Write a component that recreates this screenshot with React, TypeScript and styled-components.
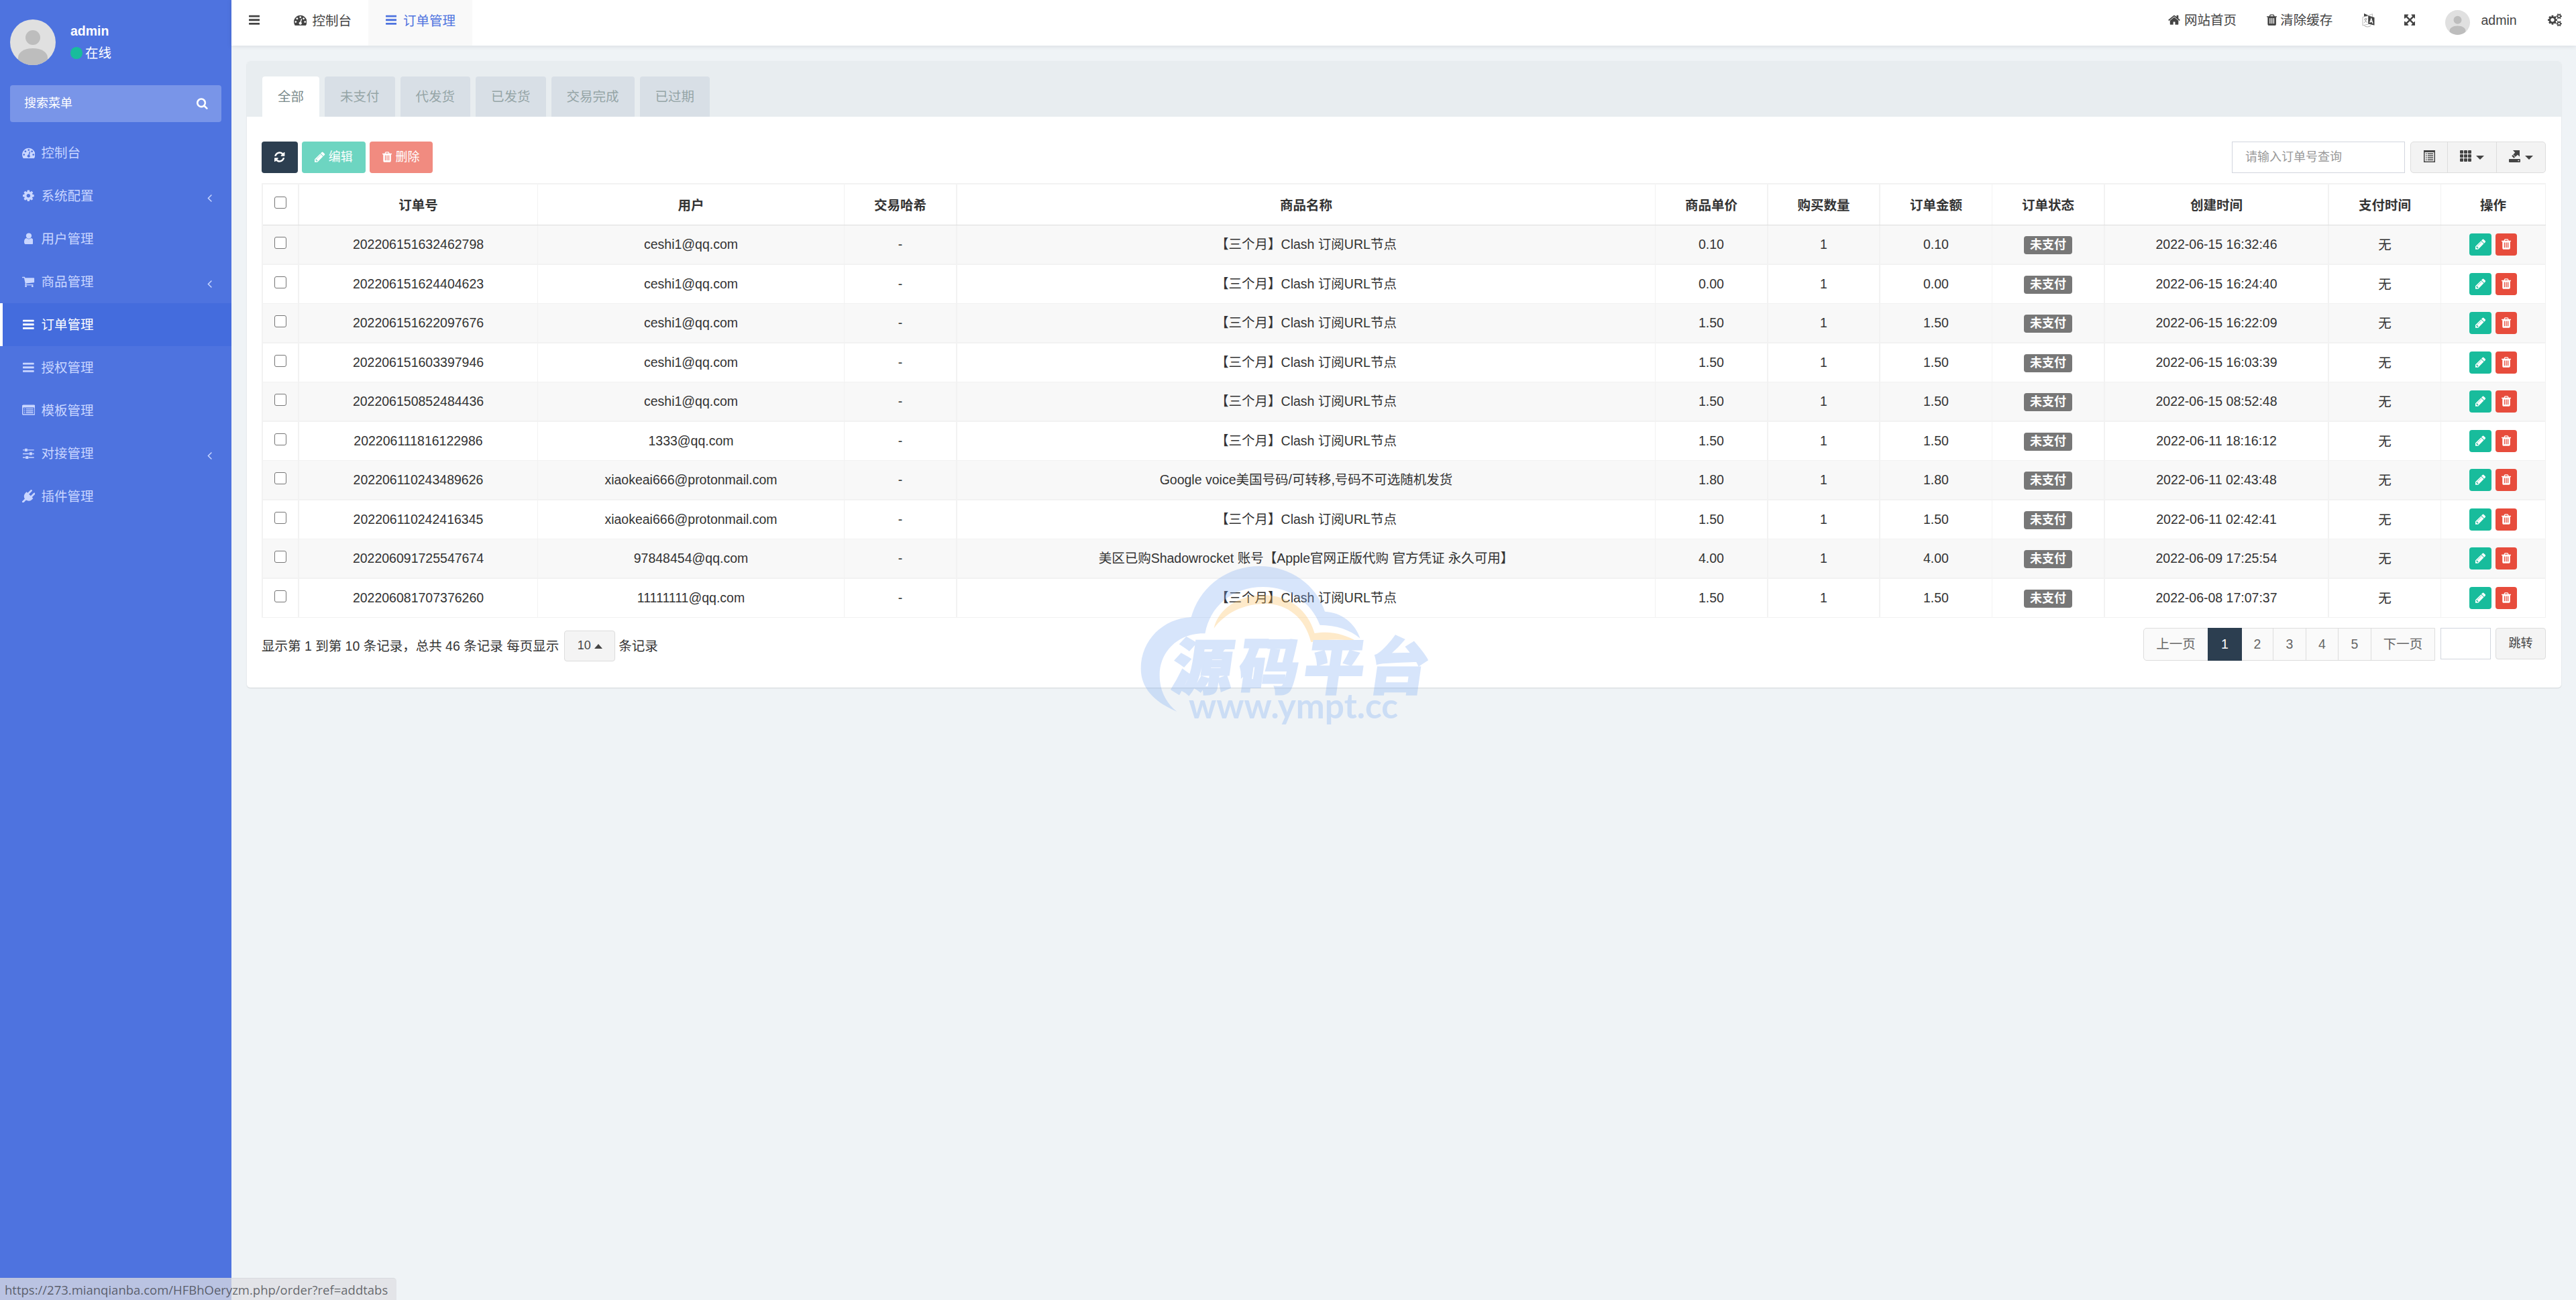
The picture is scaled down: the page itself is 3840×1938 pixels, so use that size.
import React from 'react';
import styled, { createGlobalStyle } from 'styled-components';

const GlobalStyle = createGlobalStyle`
  * { box-sizing: border-box; }
  html, body { margin: 0; padding: 0; }
  body {
    background: #eff3f6;
    color: #333;
    font-family: "Liberation Sans", "Noto Sans CJK SC", sans-serif;
    font-size: 19.5px;
    line-height: 28px;
    overflow: hidden;
  }
  button, input { font-family: inherit; line-height: inherit; margin: 0; }
`;

/* ---------- icons ---------- */

const listDot = 'v64q0 13-9.5 22.5t-22.5 9.5h-64q-13 0-22.5-9.5t-9.5-22.5v-64q0-13 9.5-22.5t22.5-9.5h64q13 0 22.5 9.5t9.5 22.5z';
const listLine = 'v64q0 13-9.5 22.5t-22.5 9.5h-960q-13 0-22.5-9.5t-9.5-22.5v-64q0-13 9.5-22.5t22.5-9.5h960q13 0 22.5 9.5t9.5 22.5z';
const smallCog = 'v140q0 16-149 31-12 27-30 52 51 113 51 138 0 4-4 7-122 71-124 71-8 0-46-47t-52-68q-20 2-30 2t-30-2q-14 21-52 68t-46 47q-2 0-124-71-4-3-4-7 0-25 51-138-18-25-30-52-149-15-149-31v-140q0-16 149-31 13-29 30-52-51-113-51-138 0-4 4-7 4-2 35-20t59-34 30-16q8 0 46 46.5t52 67.5q20-2 30-2t30 2q51-71 92-112l6-2q4 0 124 70 4 3 4 7 0 25-51 138 17 23 30 52 149 15 149 31z';
const bar = 'v128q0 26-19 45t-45 19h-1408q-26 0-45-19t-19-45v-128q0-26 19-45t45-19h1408q26 0 45 19t19 45z';
const slot = 'v-704q0-14-9-23t-23-9h-64q-14 0-23 9t-9 23v704q0 14 9 23t23 9h64q14 0 23-9t9-23z';
const knob = 'q26 0 45 19t19 45v256q0 26-19 45t-45 19h-256q-26 0-45-19t-19-45v-256q0-26 19-45t45-19h256z';
const dial = 'q0-53-37.5-90.5t-90.5-37.5-90.5 37.5-37.5 90.5 37.5 90.5 90.5 37.5 90.5-37.5 37.5-90.5z';

const glyphs = {
  bars: [1536, `M1664 1344${bar}M1664 832${bar}M1664 320${bar}`],
  dashboard: [1792, `M384 1152${dial}m192-448${dial}m428 481l101-382q6-26-7.5-48.5t-38.5-29.5-48 6.5-30 39.5l-101 382q-60 5-107 43.5t-63 98.5q-20 77 20 146t117 89 146-20 89-117q16-60-6-117t-72-91zm660-33${dial}m-640-640${dial}m448 192${dial}m320 448q0 261-141 483-19 29-54 29h-1402q-35 0-54-29-141-221-141-483 0-182 71-348t191-286 286-191 348-71 348 71 286 191 191 286 71 348z`],
  cog: [1536, 'M1152 896q0-106-75-181t-181-75-181 75-75 181 75 181 181 75 181-75 75-181zm512-109v222q0 12-8 23t-20 13l-185 28q-19 54-39 91 35 50 107 138 10 12 10 25t-9 23q-27 37-99 108t-94 71q-12 0-26-9l-138-108q-44 23-91 38-16 136-29 186-7 28-36 28h-222q-14 0-24.5-8.5t-11.5-21.5l-28-184q-49-16-90-37l-141 107q-10 9-25 9-14 0-25-11-126-114-165-168-7-10-7-23 0-12 8-23 15-21 51-66.5t54-70.5q-27-50-41-99l-183-27q-13-2-21-12.5t-8-23.5v-222q0-12 8-23t19-13l186-28q14-46 39-92-40-57-107-138-10-12-10-24 0-10 9-23 26-36 98.5-107.5t94.5-71.5q13 0 26 10l138 107q44-23 91-38 16-136 29-186 7-28 36-28h222q14 0 24.5 8.5t11.5 21.5l28 184q49 16 90 37l142-107q9-9 24-9 13 0 25 10 129 119 165 170 7 8 7 22 0 12-8 23-15 21-51 66.5t-54 70.5q26 50 41 98l183 28q13 2 21 12.5t8 23.5z'],
  user: [1280, 'M1536 1399q0 109-62.5 187t-150.5 78h-854q-88 0-150.5-78t-62.5-187q0-85 8.5-160.5t31.5-152 58.5-131 94-89 134.5-34.5q131 128 313 128t313-128q76 0 134.5 34.5t94 89 58.5 131 31.5 152 8.5 160.5zm-256-887q0 159-112.5 271.5t-271.5 112.5-271.5-112.5-112.5-271.5 112.5-271.5 271.5-112.5 271.5 112.5 112.5 271.5z'],
  cart: [1664, 'M704 1536q0 52-38 90t-90 38-90-38-38-90 38-90 90-38 90 38 38 90zm896 0q0 52-38 90t-90 38-90-38-38-90 38-90 90-38 90 38 38 90zm128-1088v512q0 24-16.5 42.5t-40.5 21.5l-1044 122q13 60 13 70 0 16-24 64h920q26 0 45 19t19 45-19 45-45 19h-1024q-26 0-45-19t-19-45q0-11 8-31.5t16-36 21.5-40 15.5-29.5l-177-823h-204q-26 0-45-19t-19-45 19-45 45-19h256q16 0 28.5 6.5t19.5 15.5 13 24.5 8 26 5.5 29.5 4.5 26h1201q26 0 45 19t19 45z'],
  listAlt: [1792, `M384 1184${listDot}m0-256${listDot}m0-256${listDot}M1536 1184${listLine}m0-256${listLine}m0-256${listLine}M1664 1376v-832q0-13-9.5-22.5t-22.5-9.5h-1472q-13 0-22.5 9.5t-9.5 22.5v832q0 13 9.5 22.5t22.5 9.5h1472q13 0 22.5-9.5t9.5-22.5zm128-1088v1088q0 66-47 113t-113 47h-1472q-66 0-113-47t-47-113v-1088q0-66 47-113t113-47h1472q66 0 113 47t47 113z`],
  sliders: [1536, `M480 1408v128h-352v-128h352zm352-128${knob}m160-384v128h-864v-128h864zm-640-512v128h-224v-128h224zm1312 1024v128h-736v-128h736zm-960-1152${knob}m640 512${knob}m320 128v128h-224v-128h224zm0-512v128h-864v-128h864z`],
  plug: [1792, 'M1755 453q37 38 37 90.5t-37 90.5l-401 400 150 150-160 160q-163 163-389.5 186.5t-411.5-100.5l-362 362h-181v-181l362-362q-124-185-100.5-411.5t186.5-389.5l160-160 150 150 400-401q38-37 91-37t90 37 37 90.5-37 90.5l-400 401 234 234 401-400q38-37 91-37t90 37z'],
  angleLeft: [640, 'M1203 544q0 13-10 23l-393 393 393 393q10 10 10 23t-10 23l-50 50q-10 10-23 10t-23-10l-466-466q-10-10-10-23t10-23l466-466q10-10 23-10t23 10l50 50q10 10 10 23z'],
  home: [1664, 'M1472 992v480q0 26-19 45t-45 19h-384v-384h-256v384h-384q-26 0-45-19t-19-45v-480q0-1 .5-3t.5-3l575-474 575 474q1 2 1 6zm223-69l-62 74q-8 9-21 11h-3q-13 0-21-7l-692-577-692 577q-12 8-24 7-13-2-21-11l-62-74q-8-10-7-23.5t11-21.5l719-599q32-26 76-26t76 26l244 204v-195q0-14 9-23t23-9h192q14 0 23 9t9 23v408l219 182q10 8 11 21.5t-7 23.5z'],
  trash: [1408, `M704 1376${slot}M960 1376${slot}M1216 1376${slot}M672 384h448l-48-117q-7-9-17-11h-317q-10 2-17 11zm928 32v64q0 14-9 23t-23 9h-96v948q0 83-47 143.5t-113 60.5h-832q-66 0-113-58.5t-47-141.5v-952h-96q-14 0-23-9t-9-23v-64q0-14 9-23t23-9h309l70-167q15-37 54-63t79-26h320q40 0 79 26t54 63l70 167h309q14 0 23 9t9 23z`],
  refresh: [1536, 'M1639 1056q0 5-1 7-64 268-268 434.5t-478 166.5q-146 0-282.5-55t-243.5-157l-129 129q-19 19-45 19t-45-19-19-45v-448q0-26 19-45t45-19h448q26 0 45 19t19 45-19 45l-137 137q71 66 161 102t187 36q134 0 250-65t186-179q11-17 53-117 8-23 30-23h192q13 0 22.5 9.5t9.5 22.5zm25-800v448q0 26-19 45t-45 19h-448q-26 0-45-19t-19-45 19-45l138-138q-148-137-349-137-134 0-250 65t-186 179q-11 17-53 117-8 23-30 23h-199q-13 0-22.5-9.5t-9.5-22.5v-7q65-268 270-434.5t480-166.5q146 0 284 55.5t245 156.5l130-129q19-19 45-19t45 19 19 45z'],
  pencil: [1536, 'M491 1536l91-91-235-235-91 91v107h128v128h107zm523-928q0-22-22-22-10 0-17 7l-542 542q-7 7-7 17 0 22 22 22 10 0 17-7l542-542q7-7 7-17zm-54-192l416 416-832 832h-416v-416zm683 96q0 53-37 90l-166 166-416-416 166-165q36-38 90-38 53 0 91 38l235 234q37 39 37 91z'],
  search: [1664, 'M1216 832q0-185-131.5-316.5t-316.5-131.5-316.5 131.5-131.5 316.5 131.5 316.5 316.5 131.5 316.5-131.5 131.5-316.5zm512 832q0 52-38 90t-90 38q-54 0-90-38l-343-342q-179 124-399 124-143 0-273.5-55.5t-225-150-150-225-55.5-273.5 55.5-273.5 150-225 225-150 273.5-55.5 273.5 55.5 225 150 150 225 55.5 273.5q0 220-124 399l343 343q37 37 37 90z'],
  arrows: [1536, 'M1411 541l-355 355 355 355 144-144q29-31 70-14 39 17 39 59v448q0 26-19 45t-45 19h-448q-42 0-59-40-17-39 14-69l144-144-355-355-355 355 144 144q31 30 14 69-17 40-59 40h-448q-26 0-45-19t-19-45v-448q0-42 40-59 39-17 69 14l144 144 355-355-355-355-144 144q-19 19-45 19-12 0-24-5-40-17-40-59v-448q0-26 19-45t45-19h448q42 0 59 40 17 39-14 69l-144 144 355 355 355-355-144-144q-31-30-14-69 17-40 59-40h448q26 0 45 19t19 45v448q0 42-39 59-13 5-25 5-26 0-45-19z'],
  cogs: [1920, `M896 896q0-106-75-181t-181-75-181 75-75 181 75 181 181 75 181-75 75-181zm768 512q0-52-38-90t-90-38-90 38-38 90q0 53 37.5 90.5t90.5 37.5 90.5-37.5 37.5-90.5zm0-1024q0-52-38-90t-90-38-90 38-38 90q0 53 37.5 90.5t90.5 37.5 90.5-37.5 37.5-90.5zm-384 421v185q0 10-7 19.5t-16 10.5l-155 24q-11 35-32 76 34 48 90 115 7 10 7 20 0 12-7 19-23 30-82.5 89.5t-78.5 59.5q-11 0-21-7l-115-90q-37 19-77 31-11 108-23 155-7 24-30 24h-186q-11 0-20-7.5t-10-17.5l-23-153q-34-10-75-31l-118 89q-7 7-20 7-11 0-21-8-144-133-144-160 0-9 7-19 10-14 41-53t47-61q-23-44-35-82l-152-24q-10-1-17-9.5t-7-19.5v-185q0-10 7-19.5t16-10.5l155-24q11-35 32-76-34-48-90-115-7-11-7-20 0-12 7-20 22-30 82-89t79-59q11 0 21 7l115 90q34-18 77-32 11-108 23-154 7-24 30-24h186q11 0 20 7.5t10 17.5l23 153q34 10 75 31l118-89q8-7 20-7 11 0 21 8 144 133 144 160 0 9-7 19-12 16-42 54t-45 60q23 48 34 82l152 23q10 2 17 10.5t7 19.5zm640 533${smallCog}m0-1024${smallCog}`],
} as const;

type GlyphName = keyof typeof glyphs;

const Icon = ({ name, size = 19.5 }: { name: GlyphName; size?: number }) => {
  const [w, d] = glyphs[name];
  const x = name === 'cogs' ? 0 : (1792 - w) / 2;
  return (
    <svg width={(size * w) / 1792} height={size} viewBox={`${x} 0 ${w} 1792`} fill="currentColor" aria-hidden>
      <path d={d} />
    </svg>
  );
};

const LanguageIcon = () => (
  <svg width="19" height="21" viewBox="0 0 19 21" aria-hidden>
    <path d="M3 0l6 2.800L9 4 3 5z" fill="#444" />
    <path d="M8.500 3.600l7-2.800V5" fill="none" stroke="#aaa" strokeWidth=".8" />
    <path d="M1 5.500l8.500-2v12.500l-8.500 2z" fill="#fff" stroke="#aaa" strokeWidth=".8" />
    <path d="M9.300 3.200l9.200 2.800v11.800l-9.200-2.400z" fill="#444" />
    <path d="M3 8.800l4.800-1M5.300 6.800v1.400M6.800 8.200q-1 4-3.800 6M4 9.500q1.500 3 4 4" fill="none" stroke="#888" strokeWidth=".8" />
    <path d="M11.800 13.800l2-6 2.200 7.200M12.400 12l3 .6" fill="none" stroke="#fff" strokeWidth="1.300" />
    <path d="M3.500 18.500q5 3.200 10-.4" fill="none" stroke="#999" strokeWidth=".8" />
  </svg>
);

const DetailIcon = () => (
  <svg width="17" height="18" viewBox="0 0 17 18" aria-hidden>
    <path fill="#444" fillRule="evenodd" d="M0 0h17v18H0zM1.500 3v13.500h14V3z" />
    <path fill="#444" d="M3 4.500h1.500v1.600H3zM3 7.500h1.500v1.600H3zM3 10.500h1.500v1.600H3zM3 13.500h1.500v1.600H3zM5.800 4.500H14v1.600H5.800zM5.800 7.500H14v1.600H5.800zM5.800 10.500H14v1.600H5.800zM5.800 13.500H14v1.600H5.800z" />
  </svg>
);

const GridIcon = () => (
  <svg width="17" height="17" viewBox="0 0 17 17" fill="#444" aria-hidden>
    {[0, 6, 12].map((y) => [0, 6, 12].map((x) => <rect key={`${x}-${y}`} x={x} y={y} width="5" height="5" rx="1" />))}
  </svg>
);

const ExportIcon = () => (
  <svg width="17" height="18" viewBox="0 0 17 18" fill="#444" aria-hidden>
    <path d="M6 0h10v9.500l-3-2.800-5.600 5-3.200-3.200 5-5z" />
    <path d="M6 6.600l3.600 3.400" stroke="#f3f3f3" strokeWidth="1" />
    <path d="M1 13h15q1 0 1 1v3q0 1-1 1H1q-1 0-1-1v-3q0-1 1-1z" />
    <rect x="13.500" y="14.800" width="1.800" height="1.400" fill="#f4f4f4" />
  </svg>
);

const Avatar = ({ size }: { size: number }) => (
  <svg width={size} height={size} viewBox="0 0 68 68" aria-hidden>
    <defs>
      <clipPath id={`round-${size}`}><circle cx="34" cy="34" r="34" /></clipPath>
    </defs>
    <g clipPath={`url(#round-${size})`}>
      <rect width="68" height="68" fill="#e0e0e0" />
      <circle cx="34" cy="27" r="11" fill="#bdbdbd" />
      <path d="M12 68V57c0-8 9-14 22-14s22 6 22 14v11z" fill="#bdbdbd" />
    </g>
  </svg>
);

/* ---------- shell ---------- */

const Shell = styled.div`
  display: grid;
  grid-template-columns: 345px 1fr;
  width: 3840px;
  height: 1938px;
  position: relative;
  overflow: hidden;
`;

const Sidebar = styled.aside`
  background: #4e73df;
  color: #fff;
`;

const UserPanel = styled.div`
  display: flex;
  gap: 22px;
  padding: 29px 15px 0;
  height: 127px;
`;

const UserInfo = styled.div`
  padding-top: 3px;
`;

const UserName = styled.div`
  font-weight: 700;
`;

const Online = styled.div`
  display: flex;
  align-items: center;
  gap: 4.5px;
  margin-top: 5px;
`;

const Dot = styled.span`
  width: 17.5px;
  height: 17.5px;
  border-radius: 50%;
  background: #18bc9c;
`;

const SearchBox = styled.label`
  display: flex;
  align-items: center;
  justify-content: space-between;
  width: 315px;
  height: 55px;
  margin: 0 15px 14px;
  padding: 0 20px 1px 21px;
  border-radius: 4px;
  background: #7995e8;
  font-size: 18px;
`;

const Menu = styled.nav`
  display: flex;
  flex-direction: column;
`;

const MenuItem = styled.a<{ $active?: boolean }>`
  display: flex;
  align-items: center;
  height: 64px;
  padding: 0 29px 0 27px;
  border-left: 4px solid ${(p) => (p.$active ? '#fff' : 'transparent')};
  background: ${(p) => (p.$active ? '#446cdd' : 'transparent')};
  color: ${(p) => (p.$active ? '#fff' : '#c9d6ff')};
`;

const MenuIcon = styled.span`
  display: flex;
  justify-content: center;
  width: 23px;
  margin-right: 7.5px;
  padding-bottom: 1px;
`;

const MenuLabel = styled.span`
  flex: 1;
`;

const Chevron = styled.span`
  display: flex;
  padding-top: 6px;
`;

const Main = styled.main`
  display: flex;
  flex-direction: column;
  min-width: 0;
`;

const Header = styled.header`
  display: flex;
  justify-content: space-between;
  height: 68px;
  background: #fff;
  color: #444;
  box-shadow: 0 1px 7px rgba(0, 21, 41, 0.1);
`;

const HeaderSide = styled.div<{ $right?: boolean }>`
  display: flex;
  padding-right: ${(p) => (p.$right ? 21.5 : 0)}px;
`;

const HeaderItem = styled.a<{ $active?: boolean; $gap?: number; $pad?: string }>`
  display: flex;
  align-items: center;
  gap: ${(p) => p.$gap ?? 8}px;
  padding: 0 ${(p) => p.$pad ?? '24.5px'};
  padding-bottom: 7px;
  background: ${(p) => (p.$active ? '#f9f9f9' : 'transparent')};
  color: ${(p) => (p.$active ? '#4e73df' : '#444')};
`;

const IconSlot = styled.span`
  display: flex;
  justify-content: center;
  width: 20px;
  padding-bottom: 1px;
`;

const RightItem = styled.a<{ $gap?: number; $ml?: number }>`
  display: flex;
  align-items: center;
  gap: ${(p) => p.$gap ?? 0}px;
  margin-left: ${(p) => p.$ml ?? 0}px;
  padding-bottom: 8px;
`;

const AvatarSlot = styled.span`
  display: flex;
  padding-top: 7px;
`;

/* ---------- panel ---------- */

const Panel = styled.section`
  margin: 23px 22px 0 23px;
  height: 934px;
  border-radius: 5px;
  background: #fff;
  box-shadow: 0 1px 2px rgba(0, 0, 0, 0.12);
  overflow: hidden;
`;

const Tabs = styled.div`
  display: flex;
  gap: 8px;
  height: 83px;
  padding: 23px 23px 0;
  background: #e8edf0;
`;

const Tab = styled.button<{ $active?: boolean }>`
  height: 60px;
  padding: 0 23px 1px;
  border: 0;
  border-radius: 4px 4px 0 0;
  background: ${(p) => (p.$active ? '#fff' : '#d8dfe6')};
  color: ${(p) => (p.$active ? '#7b8a8b' : '#95a5a6')};
  font-size: 19.5px;
`;

const PanelBody = styled.div`
  padding: 37px 23px 0 22px;
`;

const Toolbar = styled.div`
  display: flex;
  justify-content: space-between;
  height: 62px;
`;

const ToolGroup = styled.div<{ $gap: number }>`
  display: flex;
  align-items: flex-start;
  gap: ${(p) => p.$gap}px;
`;

const tones = { dark: '#2c3e50', green: '#6dd5c1', red: '#f18b80' };

const ToolButton = styled.button<{ $tone: keyof typeof tones; $width: number }>`
  display: flex;
  align-items: center;
  justify-content: center;
  gap: 5px;
  width: ${(p) => p.$width}px;
  height: 47px;
  padding: 0 0 1px;
  border: 0;
  border-radius: 4px;
  background: ${(p) => tones[p.$tone]};
  color: #fff;
  font-size: 18px;
`;

const SearchInput = styled.input`
  width: 258px;
  height: 47px;
  padding: 0 19px 1px;
  border: 1px solid #d2d6de;
  border-radius: 0;
  background: #fff;
  font-size: 18px;
  &::placeholder { color: #999; }
`;

const Segments = styled.div`
  display: flex;
  height: 47px;
  border: 1px solid #ddd;
  border-radius: 5px;
  background: #f3f3f3;
  overflow: hidden;
`;

const Segment = styled.button<{ $width: number }>`
  display: flex;
  align-items: center;
  justify-content: center;
  gap: 7px;
  width: ${(p) => p.$width}px;
  padding: 0 0 4px;
  border: 0;
  border-left: 1px solid #ddd;
  background: none;
  &:first-child { border-left: 0; }
`;

const Caret = styled.span<{ $up?: boolean }>`
  border-left: 6px solid transparent;
  border-right: 6px solid transparent;
  ${(p) => (p.$up ? 'border-bottom: 7px solid #444;' : 'border-top: 6.5px solid #444;')}
  margin-top: ${(p) => (p.$up ? 4 : 5)}px;
`;

const COLUMNS = [54, 356, 457, 168, 1041, 168, 167, 167, 168, 334, 167, 156];
const RULES = [2, 1, 1, 2, 1, 2, 2, 1, 2, 2, 1, 1];

const Table = styled.div`
  border: 2px solid #f2f2f2;
  border-right: 0;
  border-bottom: 0;
`;

const Row = styled.div<{ $head?: boolean; $odd?: boolean }>`
  display: grid;
  grid-template-columns: ${COLUMNS.map((c) => `${c}px`).join(' ')};
  height: ${(p) => (p.$head ? 61 : p.$odd ? 59 : 58)}px;
  border-bottom: ${(p) => (p.$head ? '1px solid #ddd' : `${p.$odd ? 2 : 1}px solid #f2f2f2`)};
  background: ${(p) => (p.$odd ? '#f8f8f8' : '#fff')};
  font-weight: ${(p) => (p.$head ? 700 : 400)};
`;

const Cell = styled.div<{ $rule: number; $low?: boolean }>`
  display: flex;
  align-items: center;
  justify-content: center;
  gap: 6px;
  padding: ${(p) => (p.$low ? '1px 0 0' : '0 0 1px')};
  border-right: ${(p) => p.$rule}px solid #f2f2f2;
  white-space: nowrap;
`;

const Check = styled.input.attrs({ type: 'checkbox' })`
  appearance: none;
  width: 18px;
  height: 18px;
  margin: 0 0 5px;
  border: 1px solid #767676;
  border-radius: 3px;
  background: #fff;
`;

const Status = styled.span`
  width: 72px;
  height: 27px;
  margin-top: 3px;
  border-radius: 4px;
  background: #777;
  color: #fff;
  font-size: 18px;
  font-weight: 700;
  line-height: 27px;
  text-align: center;
`;

const RowButton = styled.button<{ $red?: boolean }>`
  display: flex;
  align-items: center;
  justify-content: center;
  width: ${(p) => (p.$red ? 32 : 33)}px;
  height: 33px;
  margin-top: 1px;
  padding: 0 0 2px;
  border: 0;
  border-radius: 4px;
  background: ${(p) => (p.$red ? '#e74c3c' : '#18bc9c')};
  color: #fff;
`;

const Footer = styled.div`
  display: flex;
  justify-content: space-between;
  padding-top: 15px;
`;

const PageInfo = styled.div`
  display: flex;
  align-items: center;
  height: 46px;
  margin-top: 4px;
  white-space: pre;
`;

const SizeButton = styled.button`
  display: flex;
  align-items: center;
  justify-content: center;
  gap: 5px;
  width: 76px;
  height: 46px;
  margin: 0 5px 0 8px;
  padding: 0 0 3px;
  border: 1px solid #ddd;
  border-radius: 4px;
  background: #f4f4f4;
  color: #444;
  font-size: 18px;
`;

const Pager = styled.div`
  display: flex;
  align-items: flex-start;
`;

const PageList = styled.div`
  display: flex;
  height: 49px;
  border: 1px solid #ddd;
  border-radius: 5px 0 0 5px;
  background: #fafafa;
`;

const PageLink = styled.a<{ $active?: boolean; $width: number }>`
  display: flex;
  align-items: center;
  justify-content: center;
  width: ${(p) => p.$width}px;
  margin: ${(p) => (p.$active ? '-1px 0' : '0')};
  padding-bottom: 1px;
  border-left: ${(p) => (p.$active ? 0 : 1)}px solid #ddd;
  background: ${(p) => (p.$active ? '#2c3e50' : 'transparent')};
  color: ${(p) => (p.$active ? '#fff' : '#666')};
  &:first-child { border-left: 0; }
  &:nth-child(3) { border-left: 0; }
`;

const JumpInput = styled.input`
  width: 75px;
  height: 47px;
  margin: 0 7px 0 8px;
  border: 1px solid #d2d6de;
  background: #fff;
`;

const JumpButton = styled.button`
  width: 75px;
  height: 47px;
  padding: 0 0 2px;
  border: 1px solid #ddd;
  border-radius: 4px;
  background: #f4f4f4;
  color: #444;
  font-size: 18px;
`;

/* ---------- overlays ---------- */

const Watermark = styled.svg`
  position: absolute;
  left: 1700px;
  top: 842px;
  opacity: 0.3;
  overflow: visible;
  pointer-events: none;
`;

const LinkHint = styled.div`
  position: absolute;
  left: 0;
  bottom: 0;
  width: 591px;
  height: 33px;
  padding-left: 7px;
  border-top: 1px solid rgba(200, 204, 210, 0.4);
  border-top-right-radius: 5px;
  background: rgba(223, 223, 227, 0.745);
  color: rgba(50, 53, 58, 0.72);
  font-family: "Open Sans", "Noto Sans", sans-serif;
  font-size: 18.5px;
  line-height: 33px;
  white-space: nowrap;
`;

const MENU: { icon: GlyphName; label: string; more?: boolean; active?: boolean }[] = [
  { icon: 'dashboard', label: '控制台' },
  { icon: 'cog', label: '系统配置', more: true },
  { icon: 'user', label: '用户管理' },
  { icon: 'cart', label: '商品管理', more: true },
  { icon: 'bars', label: '订单管理', active: true },
  { icon: 'bars', label: '授权管理' },
  { icon: 'listAlt', label: '模板管理' },
  { icon: 'sliders', label: '对接管理', more: true },
  { icon: 'plug', label: '插件管理' },
];

const TABS = ['全部', '未支付', '代发货', '已发货', '交易完成', '已过期'];

const HEADINGS = ['订单号', '用户', '交易哈希', '商品名称', '商品单价', '购买数量', '订单金额', '订单状态', '创建时间', '支付时间', '操作'];

const CLASH = '【三个月】Clash 订阅URL节点';

const ORDERS = [
  ['202206151632462798', 'ceshi1@qq.com', CLASH, '0.10', '2022-06-15 16:32:46'],
  ['202206151624404623', 'ceshi1@qq.com', CLASH, '0.00', '2022-06-15 16:24:40'],
  ['202206151622097676', 'ceshi1@qq.com', CLASH, '1.50', '2022-06-15 16:22:09'],
  ['202206151603397946', 'ceshi1@qq.com', CLASH, '1.50', '2022-06-15 16:03:39'],
  ['202206150852484436', 'ceshi1@qq.com', CLASH, '1.50', '2022-06-15 08:52:48'],
  ['202206111816122986', '1333@qq.com', CLASH, '1.50', '2022-06-11 18:16:12'],
  ['202206110243489626', 'xiaokeai666@protonmail.com', 'Google voice美国号码/可转移,号码不可选随机发货', '1.80', '2022-06-11 02:43:48'],
  ['202206110242416345', 'xiaokeai666@protonmail.com', CLASH, '1.50', '2022-06-11 02:42:41'],
  ['202206091725547674', '97848454@qq.com', '美区已购Shadowrocket 账号【Apple官网正版代购 官方凭证 永久可用】', '4.00', '2022-06-09 17:25:54'],
  ['202206081707376260', '11111111@qq.com', CLASH, '1.50', '2022-06-08 17:07:37'],
];

const OrderRow = ({ order, odd }: { order: string[]; odd: boolean }) => {
  const [no, user, goods, price, time] = order;
  const cells: React.ReactNode[] = [
    <Check />,
    no,
    user,
    '-',
    goods,
    price,
    '1',
    price,
    <Status>未支付</Status>,
    time,
    '无',
    <>
      <RowButton><Icon name="pencil" size={18} /></RowButton>
      <RowButton $red><Icon name="trash" size={18} /></RowButton>
    </>,
  ];
  return (
    <Row $odd={odd}>
      {cells.map((cell, i) => <Cell key={i} $rule={RULES[i]} $low={cell === '无'}>{cell}</Cell>)}
    </Row>
  );
};

export default function App() {
  return (
    <Shell>
      <GlobalStyle />
      <Sidebar>
        <UserPanel>
          <Avatar size={68} />
          <UserInfo>
            <UserName>admin</UserName>
            <Online><Dot />在线</Online>
          </UserInfo>
        </UserPanel>
        <SearchBox>
          搜索菜单
          <Icon name="search" size={18} />
        </SearchBox>
        <Menu>
          {MENU.map((item) => (
            <MenuItem key={item.label} $active={item.active}>
              <MenuIcon><Icon name={item.icon} /></MenuIcon>
              <MenuLabel>{item.label}</MenuLabel>
              {item.more && <Chevron><Icon name="angleLeft" /></Chevron>}
            </MenuItem>
          ))}
        </Menu>
      </Sidebar>

      <Main>
        <Header>
          <HeaderSide>
            <HeaderItem $pad="24px"><IconSlot><Icon name="bars" /></IconSlot></HeaderItem>
            <HeaderItem><IconSlot><Icon name="dashboard" /></IconSlot>控制台</HeaderItem>
            <HeaderItem $active><IconSlot><Icon name="bars" /></IconSlot>订单管理</HeaderItem>
          </HeaderSide>
          <HeaderSide $right>
            <RightItem $gap={6}><Icon name="home" />网站首页</RightItem>
            <RightItem $gap={5} $ml={45}><Icon name="trash" />清除缓存</RightItem>
            <RightItem $ml={44}><LanguageIcon /></RightItem>
            <RightItem $ml={43.5}><Icon name="arrows" /></RightItem>
            <RightItem $gap={16} $ml={45}>
              <AvatarSlot><Avatar size={37} /></AvatarSlot>
              admin
            </RightItem>
            <RightItem $ml={46}><Icon name="cogs" /></RightItem>
          </HeaderSide>
        </Header>

        <Panel>
          <Tabs>
            {TABS.map((tab, i) => <Tab key={tab} $active={i === 0}>{tab}</Tab>)}
          </Tabs>
          <PanelBody>
            <Toolbar>
              <ToolGroup $gap={6}>
                <ToolButton $tone="dark" $width={54}><Icon name="refresh" size={18} /></ToolButton>
                <ToolButton $tone="green" $width={95}><Icon name="pencil" size={18} />编辑</ToolButton>
                <ToolButton $tone="red" $width={94}><Icon name="trash" size={18} />删除</ToolButton>
              </ToolGroup>
              <ToolGroup $gap={8}>
                <SearchInput placeholder="请输入订单号查询" />
                <Segments>
                  <Segment $width={54}><DetailIcon /></Segment>
                  <Segment $width={73}><GridIcon /><Caret /></Segment>
                  <Segment $width={73}><ExportIcon /><Caret /></Segment>
                </Segments>
              </ToolGroup>
            </Toolbar>

            <Table>
              <Row $head>
                <Cell $rule={RULES[0]}><Check /></Cell>
                {HEADINGS.map((h, i) => <Cell key={h} $rule={RULES[i + 1]} $low>{h}</Cell>)}
              </Row>
              {ORDERS.map((order, i) => <OrderRow key={order[0]} order={order} odd={i % 2 === 0} />)}
            </Table>

            <Footer>
              <PageInfo>
                显示第 1 到第 10 条记录，总共 46 条记录 每页显示
                <SizeButton>10<Caret $up /></SizeButton>
                条记录
              </PageInfo>
              <Pager>
                <PageList>
                  <PageLink $width={95}>上一页</PageLink>
                  <PageLink $width={51} $active>1</PageLink>
                  <PageLink $width={46}>2</PageLink>
                  <PageLink $width={49}>3</PageLink>
                  <PageLink $width={48}>4</PageLink>
                  <PageLink $width={49}>5</PageLink>
                  <PageLink $width={95}>下一页</PageLink>
                </PageList>
                <JumpInput />
                <JumpButton>跳转</JumpButton>
              </Pager>
            </Footer>
          </PanelBody>
        </Panel>
      </Main>

      <Watermark width="480" height="250" viewBox="0 0 480 250">
        <path fill="#7cabf4" d="M54.300 218.700C22 205 .7 185 .7 154.700C.7 112 34 80 75.700 78C88 34 128 2 177.500 2C224 2 262 30 275 69.700C300 71 320 87 327.500 109.700C313 97 292 90 267.500 89.700C255 56 222 33 182.900 33C136 33 104 62 96.400 102.300C58 101 28.600 128 28.600 164.700C28.600 187 38 206 54.300 218.700Z" />
        <path fill="#febb54" d="M109.600 94.700C116 66 146 45.300 182.900 45.300C222 45.300 250 68 259.600 102C284 98 304 103 323.900 114.700C302 110 276 111 254.300 115.300C246 80 220 58 186 58C154 58 126 72 109.600 94.700Z" />
        <g fill="#7cabf4">
          <text
            transform="translate(0 185) skewX(-8)"
            x="44 143 240 336"
            y="0"
            fontFamily="'Noto Sans CJK SC', sans-serif"
            fontWeight="900"
            fontSize="90"
            stroke="#7cabf4"
            strokeWidth="2.500"
          >
            源码平台
          </text>
          <text x="72" y="228.500" fontFamily="Lato, sans-serif" fontWeight="700" fontSize="51" textLength="312" lengthAdjust="spacingAndGlyphs">
            www.ympt.cc
          </text>
        </g>
      </Watermark>

      <LinkHint>https://273.mianqianba.com/HFBhOeryzm.php/order?ref=addtabs</LinkHint>
    </Shell>
  );
}
